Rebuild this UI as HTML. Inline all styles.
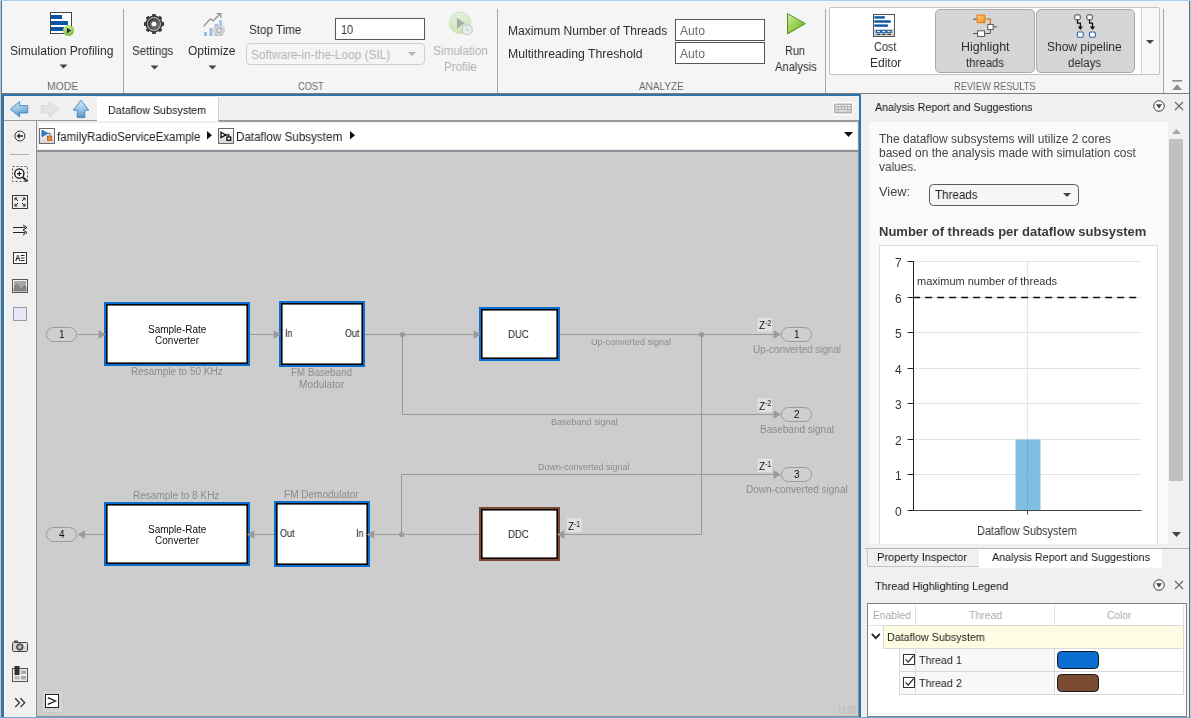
<!DOCTYPE html>
<html lang="en"><head><meta charset="utf-8"><title>Dataflow Subsystem - Multicore</title>
<style>
html,body{margin:0;padding:0;}
body{width:1191px;height:718px;overflow:hidden;background:#f5f5f5;font-family:"Liberation Sans",sans-serif;}
#root{position:relative;width:1191px;height:718px;overflow:hidden;background:#f5f5f5;}
.b{position:absolute;box-sizing:border-box;}
.t{position:absolute;will-change:transform;display:inline-block;transform-origin:0 0;white-space:nowrap;line-height:1;font-family:"Liberation Sans",sans-serif;}
svg{position:absolute;overflow:visible;}

</style></head>
<body>
<div id="root">
<div class="b" style="left:0px;top:0px;width:1191px;height:1px;background:#a3d0f3;"></div>
<div class="b" style="left:0px;top:0px;width:1px;height:718px;background:#a3d0f3;"></div>
<div class="b" style="left:1px;top:1px;width:1px;height:716px;background:#6b6b6b;z-index:5;"></div>
<div class="b" style="left:0px;top:717px;width:1191px;height:1px;background:#6fa7d5;z-index:6;"></div>
<div class="b" style="left:1189px;top:1px;width:1px;height:716px;background:#6e6e6e;z-index:5;"></div>
<div class="b" style="left:1190px;top:0px;width:1px;height:718px;background:#a3d0f3;z-index:5;"></div>
<div class="b" style="left:2px;top:93px;width:1187px;height:1px;background:#7d7d7d;"></div>
<div class="b" style="left:123px;top:9px;width:1px;height:84px;background:#a8a8a8;"></div>
<div class="b" style="left:497px;top:9px;width:1px;height:84px;background:#a8a8a8;"></div>
<div class="b" style="left:825px;top:9px;width:1px;height:84px;background:#a8a8a8;"></div>
<div class="b" style="left:1163px;top:9px;width:1px;height:84px;background:#a8a8a8;"></div>
<svg style="left:48px;top:10px" width="28" height="28" viewBox="48 10 28 28">
<rect x="50.5" y="12.5" width="21" height="21" fill="#fff" stroke="#444" stroke-width="1"/>
<rect x="51" y="15" width="11" height="4" fill="#0a55a5"/>
<rect x="51" y="21" width="17" height="4" fill="#0a55a5"/>
<rect x="51" y="27" width="15" height="4" fill="#0a55a5"/>
<defs><radialGradient id="gg" cx="0.4" cy="0.3" r="0.8"><stop offset="0" stop-color="#d4f0a0"/><stop offset="1" stop-color="#6fb52e"/></radialGradient></defs>
<circle cx="68.5" cy="30.5" r="5.5" fill="url(#gg)"/>
<path d="M66.8 27.6 L71.2 30.5 L66.8 33.4 Z" fill="#333"/>
</svg>
<span class="t" style="left:10.00px;top:45.04px;font-size:12px;color:#2e2e2e;transform:scaleX(1.0066);">Simulation Profiling</span>
<svg style="left:59px;top:64px" width="9" height="5" viewBox="0 0 9 5"><path d="M0.5 0.5 L8.5 0.5 L4.5 4.5 Z" fill="#444"/></svg>
<span class="t" style="left:47.40px;top:80.69px;font-size:11px;color:#666;transform:scaleX(0.9455);">MODE</span>
<svg style="left:142px;top:12px" width="24" height="24" viewBox="-12 -12 24 24">
<defs><linearGradient id="gr1" x1="0" y1="0" x2="1" y2="1"><stop offset="0" stop-color="#1e1e1e"/><stop offset="1" stop-color="#7a7a7a"/></linearGradient></defs>
<g fill="#3a3a3a">
<circle r="8.5"/>
<g id="tooth"><rect x="-1.9" y="-10.1" width="3.8" height="3.4" rx="0.9"/></g>
<use href="#tooth" transform="rotate(45)"/><use href="#tooth" transform="rotate(90)"/><use href="#tooth" transform="rotate(135)"/>
<use href="#tooth" transform="rotate(180)"/><use href="#tooth" transform="rotate(225)"/><use href="#tooth" transform="rotate(270)"/><use href="#tooth" transform="rotate(315)"/>
</g>
<circle r="6.9" fill="#c4c4c4"/>
<circle r="6.1" fill="url(#gr1)"/>
<circle r="4.3" fill="#8e8e8e"/>
<circle r="3.7" fill="#3c3c3c"/>
<circle r="2.6" fill="#fff"/>
</svg>
<span class="t" style="left:132.30px;top:45.04px;font-size:12px;color:#2e2e2e;transform:scaleX(0.9525);">Settings</span>
<svg style="left:150px;top:65px" width="9" height="5" viewBox="0 0 9 5"><path d="M0.5 0.5 L8.5 0.5 L4.5 4.5 Z" fill="#444"/></svg>
<svg style="left:200px;top:10px" width="28" height="28" viewBox="200 10 28 28">
<rect x="204" y="32" width="3" height="4" fill="#9dbbdc"/>
<rect x="209.5" y="28" width="3" height="8" fill="#9dbbdc"/>
<rect x="214.5" y="24" width="3" height="12" fill="#9dbbdc"/>
<rect x="219" y="20" width="3" height="16" fill="#a9c9e6"/>
<path d="M203.5 26.5 L210.5 18.8 L213 20.8 L220.5 13.8" fill="none" stroke="#929292" stroke-width="1.25"/>
<path d="M216.5 13.5 L220.8 13.5 L220.8 17.8" fill="none" stroke="#929292" stroke-width="1.25"/>
<circle cx="219.2" cy="30.2" r="5.2" fill="#d6d6d6" stroke="#c2c2c2" stroke-width="1.2" stroke-dasharray="2.2 1.4"/>
<circle cx="219.2" cy="30.2" r="3" fill="#aeb6c0"/>
<circle cx="219.2" cy="30.2" r="1.5" fill="#eee"/>
</svg>
<span class="t" style="left:188.40px;top:45.04px;font-size:12px;color:#2e2e2e;transform:scaleX(0.9949);">Optimize</span>
<svg style="left:208px;top:65px" width="9" height="5" viewBox="0 0 9 5"><path d="M0.5 0.5 L8.5 0.5 L4.5 4.5 Z" fill="#444"/></svg>
<span class="t" style="left:248.90px;top:24.34px;font-size:12px;color:#2e2e2e;transform:scaleX(0.9698);">Stop Time</span>
<div class="b" style="left:335px;top:18px;width:90px;height:22px;background:#fff;border:1px solid #575757;"></div>
<span class="t" style="left:341.00px;top:23.84px;font-size:12px;color:#2e2e2e;transform:scaleX(0.8982);">10</span>
<div class="b" style="left:245.5px;top:43px;width:179.5px;height:21.5px;background:#f5f5f5;border:1px solid #cfcfcf;border-radius:4px;"></div>
<span class="t" style="left:250.60px;top:49.04px;font-size:12px;color:#b2b2b2;transform:scaleX(0.9837);">Software-in-the-Loop (SIL)</span>
<svg style="left:408px;top:52px" width="8" height="4" viewBox="0 0 8 4"><path d="M0 0 L8 0 L4 4 Z" fill="#b5b5b5"/></svg>
<svg style="left:446px;top:9px" width="30" height="30" viewBox="446 9 30 30">
<defs><linearGradient id="lg1" x1="0" y1="0" x2="0" y2="1"><stop offset="0" stop-color="#e4f1da"/><stop offset="1" stop-color="#cbe6b8"/></linearGradient></defs>
<circle cx="460" cy="22.8" r="10.7" fill="url(#lg1)" stroke="#c3dfb3" stroke-width="0.8"/>
<path d="M457 18 L464.8 23.2 L457 28.4 Z" fill="#ababab"/>
<circle cx="467.3" cy="29.8" r="5" fill="#e6eef3" stroke="#c2c2c2" stroke-width="1"/>
<path d="M466.8 27.5 L466.8 30.6 L468.8 30.6" fill="none" stroke="#b8b8b8" stroke-width="1"/>
</svg>
<span class="t" style="left:433.00px;top:44.84px;font-size:12px;color:#b2b2b2;transform:scaleX(0.9816);">Simulation</span>
<span class="t" style="left:444.00px;top:60.84px;font-size:12px;color:#b2b2b2;transform:scaleX(0.9643);">Profile</span>
<span class="t" style="left:297.50px;top:80.69px;font-size:11px;color:#666;transform:scaleX(0.8409);">COST</span>
<span class="t" style="left:507.70px;top:24.84px;font-size:12px;color:#2e2e2e;transform:scaleX(1.0044);">Maximum Number of Threads</span>
<span class="t" style="left:507.70px;top:47.64px;font-size:12px;color:#2e2e2e;transform:scaleX(1.0200);">Multithreading Threshold</span>
<div class="b" style="left:675px;top:19px;width:90px;height:22px;background:#fff;border:1px solid #575757;"></div>
<div class="b" style="left:675px;top:42px;width:90px;height:22px;background:#fff;border:1px solid #575757;"></div>
<span class="t" style="left:680.40px;top:25.14px;font-size:12px;color:#6c6c6c;transform:scaleX(1.0127);">Auto</span>
<span class="t" style="left:680.40px;top:48.14px;font-size:12px;color:#6c6c6c;transform:scaleX(1.0127);">Auto</span>
<svg style="left:785px;top:11px" width="24" height="26" viewBox="785 11 24 26">
<defs><linearGradient id="lg2" x1="0" y1="0" x2="1" y2="1"><stop offset="0" stop-color="#d6efa8"/><stop offset="0.6" stop-color="#8dc63f"/><stop offset="1" stop-color="#6aa82a"/></linearGradient></defs>
<path d="M787.5 13.6 L805.3 23.6 L787.5 34 Z" fill="url(#lg2)" stroke="#4f9420" stroke-width="1" stroke-linejoin="round"/>
</svg>
<span class="t" style="left:785.30px;top:44.64px;font-size:12px;color:#2e2e2e;transform:scaleX(0.9084);">Run</span>
<span class="t" style="left:774.50px;top:60.84px;font-size:12px;color:#2e2e2e;transform:scaleX(0.9331);">Analysis</span>
<span class="t" style="left:639.30px;top:80.69px;font-size:11px;color:#666;transform:scaleX(0.9065);">ANALYZE</span>
<div class="b" style="left:829px;top:7px;width:331px;height:67.5px;background:#fff;border:1px solid #c4c4c4;border-radius:2px;"></div>
<div class="b" style="left:1140.5px;top:8px;width:1px;height:65.5px;background:#d5d5d5;"></div>
<div class="b" style="left:1141.5px;top:8px;width:17.5px;height:65.5px;background:#f7f7f7;"></div>
<svg style="left:1146px;top:40px" width="8" height="4" viewBox="0 0 8 4"><path d="M0 0 L8 0 L4 4 Z" fill="#444"/></svg>
<svg style="left:872px;top:13px" width="25" height="25" viewBox="872 13 25 25">
<rect x="873.5" y="14.5" width="21" height="22" fill="#fff" stroke="#555" stroke-width="1"/>
<rect x="874.3" y="16.2" width="10.5" height="2.4" fill="#0a55a5"/>
<rect x="874.3" y="20.3" width="16.5" height="2.4" fill="#0a55a5"/>
<rect x="874.3" y="24.4" width="13.6" height="2.4" fill="#0a55a5"/>
<rect x="874" y="29" width="20" height="7" fill="#cfcfcf"/>
<rect x="875.8" y="30.2" width="16" height="2.6" fill="#0a55a5"/>
<rect x="877" y="31" width="3" height="1" fill="#dfe8f5"/><rect x="882.2" y="31" width="3" height="1" fill="#dfe8f5"/><rect x="887.4" y="31" width="3" height="1" fill="#dfe8f5"/>
<rect x="876.5" y="33.8" width="3.8" height="1" fill="#222"/><rect x="881.8" y="33.8" width="3.8" height="1" fill="#222"/><rect x="887.2" y="33.8" width="3.8" height="1" fill="#222"/>
</svg>
<span class="t" style="left:873.90px;top:41.34px;font-size:12px;color:#2e2e2e;transform:scaleX(0.9073);">Cost</span>
<span class="t" style="left:869.80px;top:57.34px;font-size:12px;color:#2e2e2e;transform:scaleX(0.9949);">Editor</span>
<div class="b" style="left:935px;top:9px;width:100px;height:64px;background:#d5d5d5;border:1px solid #a9a9a9;border-radius:5px;"></div>
<svg style="left:972px;top:13px" width="27" height="26" viewBox="972 13 27 26">
<defs><linearGradient id="og" x1="0" y1="0" x2="1" y2="1"><stop offset="0" stop-color="#fbd08a"/><stop offset="1" stop-color="#f28c1e"/></linearGradient></defs>
<path d="M973 19.2 H977 M993.3 26.8 H997 M973 33.5 H977.3 M984.7 33.5 H990.3 V29.6" fill="none" stroke="#555" stroke-width="1"/>
<path d="M985.2 19 H990.3 V24.2" fill="none" stroke="#d66a10" stroke-width="1.2"/>
<rect x="977.2" y="15.2" width="7.6" height="7.4" fill="url(#og)" stroke="#e8821a" stroke-width="1.2"/>
<rect x="987.8" y="24.4" width="5.4" height="5.2" fill="#fff" stroke="#555" stroke-width="1"/>
<rect x="977.6" y="30.8" width="7" height="5.6" fill="#fff" stroke="#555" stroke-width="1"/>
</svg>
<span class="t" style="left:960.80px;top:41.34px;font-size:12px;color:#2e2e2e;transform:scaleX(1.0406);">Highlight</span>
<span class="t" style="left:966.40px;top:57.34px;font-size:12px;color:#2e2e2e;transform:scaleX(0.9493);">threads</span>
<div class="b" style="left:1035.5px;top:9px;width:99.5px;height:64px;background:#d5d5d5;border:1px solid #a9a9a9;border-radius:5px;"></div>
<svg style="left:1073px;top:13px" width="25" height="26" viewBox="1073 13 25 26">
<rect x="1074.8" y="14.9" width="5.4" height="4.8" rx="0.8" fill="#fff" stroke="#444" stroke-width="1"/>
<rect x="1086.9" y="14.9" width="5.4" height="4.8" rx="0.8" fill="#fff" stroke="#444" stroke-width="1"/>
<path d="M1077.5 20 V23.2 H1080.4 V27.5" fill="none" stroke="#111" stroke-width="1.3"/>
<path d="M1077.8 26.6 H1083 L1080.4 30 Z" fill="#111"/>
<path d="M1089.6 20 V23.2 H1092.5 V27.5" fill="none" stroke="#111" stroke-width="1.3"/>
<path d="M1089.9 26.6 H1095.1 L1092.5 30 Z" fill="#111"/>
<rect x="1077.4" y="32" width="5.8" height="5.2" rx="1.1" fill="#fff" stroke="#2a62ad" stroke-width="1.1"/>
<rect x="1089.5" y="32" width="5.8" height="5.2" rx="1.1" fill="#fff" stroke="#2a62ad" stroke-width="1.1"/>
</svg>
<span class="t" style="left:1047.40px;top:41.34px;font-size:12px;color:#2e2e2e;">Show pipeline</span>
<span class="t" style="left:1068.30px;top:57.34px;font-size:12px;color:#2e2e2e;transform:scaleX(0.9514);">delays</span>
<span class="t" style="left:954.00px;top:80.69px;font-size:11px;color:#666;transform:scaleX(0.8467);">REVIEW RESULTS</span>
<svg style="left:1171px;top:79px" width="13" height="12" viewBox="0 0 13 12">
<rect x="1.2" y="1" width="10" height="1.7" fill="#8f8f8f"/>
<path d="M6.2 5.2 L11.2 11 L1.2 11 Z" fill="#8f8f8f"/>
</svg>
<div class="b" style="left:2px;top:94px;width:859px;height:630px;background:#f0f0f0;border:2px solid #2e73ab;"></div>
<div class="b" style="left:4px;top:120px;width:855px;height:1px;background:#9a9a9a;"></div>
<div class="b" style="left:97px;top:96px;width:121px;height:26px;background:#fff;border-top:1px solid #e6e6e6;"></div>
<div class="b" style="left:218px;top:97px;width:1px;height:23px;background:#d4d4d4;"></div>
<span class="t" style="left:108.20px;top:104.87px;font-size:11.5px;color:#111;transform:scaleX(0.9358);">Dataflow Subsystem</span>
<svg style="left:8px;top:98px" width="84" height="22" viewBox="8 98 84 22">
<defs>
<linearGradient id="ab" x1="0" y1="0" x2="0.3" y2="1"><stop offset="0" stop-color="#d6ebfa"/><stop offset="0.5" stop-color="#9fcaea"/><stop offset="1" stop-color="#5a9bd0"/></linearGradient>
<linearGradient id="ab2" x1="0" y1="0" x2="0" y2="1"><stop offset="0" stop-color="#cfe7f8"/><stop offset="0.5" stop-color="#9ccaeb"/><stop offset="1" stop-color="#4f93cb"/></linearGradient>
</defs>
<path d="M10.3 109.2 L19.6 101.6 L19.6 105.6 L27.7 105.6 L27.7 112.9 L19.6 112.9 L19.6 116.9 Z" fill="url(#ab)" stroke="#4682ba" stroke-width="0.9" stroke-linejoin="round"/>
<path d="M58.7 109.2 L49.4 101.6 L49.4 105.6 L41.3 105.6 L41.3 112.9 L49.4 112.9 L49.4 116.9 Z" fill="#e4e4e4" stroke="#d6d6d6" stroke-width="0.9" stroke-linejoin="round"/>
<path d="M81 100.3 L88.8 110.2 L84.8 110.2 L84.8 117.6 L77.2 117.6 L77.2 110.2 L73.2 110.2 Z" fill="url(#ab2)" stroke="#4682ba" stroke-width="0.9" stroke-linejoin="round"/>
</svg>
<svg style="left:833px;top:102px" width="20" height="13" viewBox="0 0 20 13">
<rect x="0" y="0" width="20" height="13" fill="#fff"/>
<rect x="1" y="1.5" width="18" height="10" fill="#b4b4b4"/>
<g fill="#efefef"><rect x="2.5" y="3" width="2" height="1.3"/><rect x="5.5" y="3" width="2" height="1.3"/><rect x="8.5" y="3" width="2" height="1.3"/><rect x="11.5" y="3" width="2" height="1.3"/><rect x="14.5" y="3" width="2.6" height="1.3"/>
<rect x="2.5" y="5.6" width="2.6" height="1.3"/><rect x="6" y="5.6" width="2" height="1.3"/><rect x="9" y="5.6" width="2" height="1.3"/><rect x="12" y="5.6" width="2" height="1.3"/><rect x="15" y="5.6" width="2.4" height="1.3"/>
<rect x="2.5" y="8.3" width="2" height="1.3"/><rect x="5.5" y="8.3" width="9" height="1.3"/><rect x="15.5" y="8.3" width="2" height="1.3"/></g>
</svg>
<div class="b" style="left:36px;top:121px;width:1px;height:596px;background:#868b94;"></div>
<div class="b" style="left:10px;top:154px;width:19px;height:1px;background:#b0b0b0;"></div>
<svg style="left:8px;top:126px" width="26" height="200" viewBox="8 126 26 200">
<circle cx="19.9" cy="136" r="5" fill="#f4f4f4" stroke="#333" stroke-width="1"/>
<path d="M16.6 136 L19.6 133.3 L19.6 135.2 L23 135.2 L23 136.8 L19.6 136.8 L19.6 138.7 Z" fill="#222"/>
<rect x="12.5" y="166.5" width="15" height="15" fill="none" stroke="#555" stroke-width="1" stroke-dasharray="2 2"/>
<circle cx="19.3" cy="173.6" r="4.6" fill="#fff" stroke="#222" stroke-width="1.4"/>
<path d="M17 173.6 H21.6 M19.3 171.3 V175.9" stroke="#111" stroke-width="1.2"/>
<path d="M22.8 177.2 L27.2 181.2" stroke="#222" stroke-width="2"/>
<rect x="12.5" y="195.5" width="15" height="13" fill="#eee" stroke="#3a3a3a" stroke-width="1"/>
<path d="M15 198 L18 201 M15 198 H17.3 M15 198 V200.3 M25 198 L22 201 M25 198 H22.7 M25 198 V200.3 M15 206 L18 203 M15 206 H17.3 M15 206 V203.7 M25 206 L22 203 M25 206 H22.7 M25 206 V203.7" stroke="#222" stroke-width="1" fill="none"/>
<path d="M13 227.5 H25 M13 232.5 H25" stroke="#222" stroke-width="1.2"/>
<path d="M23 225 L27 227.5 L23 230 M23 230 L27 232.5 L23 235" stroke="#222" stroke-width="1" fill="none"/>
<rect x="13.5" y="252.5" width="13" height="11" fill="#fff" stroke="#333" stroke-width="1"/>
<path d="M20.8 255.5 H24.6 M20.8 258 H24.6 M20.8 260.5 H24.6" stroke="#222" stroke-width="1"/>
<rect x="12.5" y="279.5" width="15" height="13" fill="#f2f2f2" stroke="#555" stroke-width="1"/>
<rect x="14" y="281" width="12" height="10" fill="#a8a8a8"/>
<path d="M14 289 C15.5 283.5 18 283.5 19.5 287 C20.5 289.5 22 289.5 23 287 C24 285 25 285.5 26 287.5 V291 H14 Z" fill="#8a8a8a" stroke="#666" stroke-width="0.7"/>
<rect x="13.5" y="307.5" width="13" height="13" fill="#e7e9f9" stroke="#9a9a9a" stroke-width="1"/>
</svg>
<span class="t" style="left:15.00px;top:253.98px;font-size:9px;color:#111;font-weight:bold;transform:scaleX(0.8615);">A</span>
<svg style="left:10px;top:638px" width="22" height="72" viewBox="10 638 22 72">
<rect x="12.5" y="642.5" width="15" height="9" rx="1" fill="#d8d8d8" stroke="#444" stroke-width="1"/>
<rect x="14" y="640.5" width="4" height="2" fill="#555"/>
<circle cx="19.8" cy="647" r="3.2" fill="#888" stroke="#333" stroke-width="1"/>
<circle cx="19.8" cy="647" r="1.3" fill="#ccc"/>
<rect x="24" y="644" width="2" height="1.4" fill="#fff"/>
<rect x="12.5" y="668.5" width="15" height="13" fill="#ececec" stroke="#555" stroke-width="1"/>
<rect x="14.5" y="666" width="5" height="9" fill="#333"/>
<rect x="21" y="670.5" width="5" height="3.5" fill="#aaa"/><rect x="21" y="676" width="5" height="3.5" fill="#aaa"/><rect x="14.5" y="676" width="5" height="3.5" fill="#bbb"/>
<path d="M15.2 698.3 L19.5 702.7 L15.2 707.1 M20.4 698.3 L24.7 702.7 L20.4 707.1" fill="none" stroke="#333" stroke-width="1.3"/>
</svg>
<div class="b" style="left:37px;top:121px;width:822px;height:30px;background:#fff;border:2px solid #eeeeee;"></div>
<div class="b" style="left:37px;top:150px;width:822px;height:2px;background:#8a8f98;"></div>
<div class="b" style="left:219px;top:121px;width:640px;height:1px;background:#a2a2a2;"></div>
<svg style="left:38px;top:126px" width="320" height="20" viewBox="38 126 320 20">
<defs><linearGradient id="ic" x1="0" y1="0" x2="0" y2="1"><stop offset="0" stop-color="#fff"/><stop offset="1" stop-color="#d4d4d4"/></linearGradient></defs>
<rect x="39.5" y="128.5" width="15" height="15" fill="url(#ic)" stroke="#6a6a6a" stroke-width="1"/>
<path d="M42 130.3 L47.8 133.4 L42 136.5 Z" fill="#2a7fd6" stroke="#1b5aa3" stroke-width="0.8"/>
<path d="M47.8 133.4 H50 V136" fill="none" stroke="#444" stroke-width="0.8"/>
<rect x="47.5" y="136.2" width="4.2" height="4.2" fill="#f08a2a" stroke="#b55a10" stroke-width="0.8"/>
<path d="M207 131 L212 135.3 L207 139.6 Z" fill="#111"/>
<rect x="218.5" y="128.5" width="15" height="15" fill="url(#ic)" stroke="#6a6a6a" stroke-width="1"/>
<path d="M221 132.2 L225.8 134.9 L221 137.6 Z" fill="#fff" stroke="#111" stroke-width="1.3"/>
<path d="M225.6 134.9 H228.7 V136.8" fill="none" stroke="#111" stroke-width="1.2"/>
<rect x="226.9" y="137" width="3.8" height="3.3" fill="#fff" stroke="#111" stroke-width="1.3"/>
<path d="M350 131 L355 135.3 L350 139.6 Z" fill="#111"/>
</svg>
<span class="t" style="left:56.80px;top:131.04px;font-size:12px;color:#222;transform:scaleX(0.9599);">familyRadioServiceExample</span>
<span class="t" style="left:235.80px;top:131.04px;font-size:12px;color:#222;transform:scaleX(0.9708);">Dataflow Subsystem</span>
<svg style="left:844px;top:132px" width="9" height="5" viewBox="0 0 9 5"><path d="M0 0 L9 0 L4.5 5 Z" fill="#111"/></svg>
<div class="b" style="left:37px;top:152px;width:821px;height:564px;background:#cdcdcd;"></div>
<div class="b" style="left:858px;top:121px;width:1px;height:596px;background:#8c8c8c;"></div>
<div class="b" style="left:37px;top:716px;width:822px;height:1px;background:#8c8c8c;"></div>
<div class="b" style="left:4px;top:121px;width:1px;height:596px;background:#fbfaf8;"></div>
<div class="b" style="left:35px;top:121px;width:1px;height:596px;background:#fbfaf8;"></div>
<svg style="left:37px;top:152px" width="821" height="563" viewBox="37 152 821 563">
<g fill="none" stroke="#9a9a9a" stroke-width="1">
<path d="M78 334.5 H100"/>
<path d="M250 334.5 H275"/>
<path d="M364 334.5 H476"/>
<path d="M402.5 334.5 V414.5 H776"/>
<path d="M560 334.5 H776"/>
<path d="M701.5 334.5 V534.5 H562"/>
<path d="M479 534.5 H374"/>
<path d="M401.5 534.5 V474.5 H776"/>
<path d="M274 534.5 H254"/>
<path d="M104 534.5 H84"/>
</g>
<circle cx="402.5" cy="334.5" r="2.6" fill="#9a9a9a"/>
<circle cx="701.5" cy="334.5" r="2.6" fill="#9a9a9a"/>
<circle cx="401.5" cy="534.5" r="2.6" fill="#9a9a9a"/>
<rect x="104" y="302" width="146" height="64" fill="#0a6dd0"/><rect x="106" y="304" width="142" height="60" fill="#0a0503"/><rect x="107.6" y="305.6" width="138.8" height="56.8" fill="#fff"/>
<rect x="279" y="301" width="86" height="66" fill="#0a6dd0"/><rect x="281" y="303" width="82" height="62" fill="#0a0503"/><rect x="282.6" y="304.6" width="78.8" height="58.8" fill="#fff"/>
<rect x="479" y="307" width="81" height="54" fill="#0a6dd0"/><rect x="481" y="309" width="77" height="50" fill="#0a0503"/><rect x="482.6" y="310.6" width="73.8" height="46.8" fill="#fff"/>
<rect x="104" y="502" width="146" height="64" fill="#0a6dd0"/><rect x="106" y="504" width="142" height="60" fill="#0a0503"/><rect x="107.6" y="505.6" width="138.8" height="56.8" fill="#fff"/>
<rect x="274" y="501" width="96" height="66" fill="#0a6dd0"/><rect x="276" y="503" width="92" height="62" fill="#0a0503"/><rect x="277.6" y="504.6" width="88.8" height="58.8" fill="#fff"/>
<rect x="479" y="507" width="81" height="54" fill="#7b4a33"/><rect x="481" y="509" width="77" height="50" fill="#0a0503"/><rect x="482.6" y="510.6" width="73.8" height="46.8" fill="#fff"/>
<path d="M98.6 330.3 L106 334.5 L98.6 338.7 Z" fill="#9a9a9a"/>
<path d="M273.6 330.3 L281 334.5 L273.6 338.7 Z" fill="#9a9a9a"/>
<path d="M473.6 330.3 L481 334.5 L473.6 338.7 Z" fill="#9a9a9a"/>
<path d="M773.6 330.3 L781 334.5 L773.6 338.7 Z" fill="#9a9a9a"/>
<path d="M773.6 410.3 L781 414.5 L773.6 418.7 Z" fill="#9a9a9a"/>
<path d="M773.6 470.3 L781 474.5 L773.6 478.7 Z" fill="#9a9a9a"/>
<path d="M564.4 530.3 L557 534.5 L564.4 538.7 Z" fill="#9a9a9a"/>
<path d="M374.2 530.3 L366.8 534.5 L374.2 538.7 Z" fill="#9a9a9a"/>
<path d="M254.4 530.3 L247 534.5 L254.4 538.7 Z" fill="#9a9a9a"/>
<path d="M84.9 530.3 L77.5 534.5 L84.9 538.7 Z" fill="#9a9a9a"/>
<rect x="46.5" y="327.5" width="30" height="14" rx="7" fill="#cfcfcf" stroke="#9a9a9a" stroke-width="1"/>
<rect x="46.5" y="527.5" width="30" height="14" rx="7" fill="#cfcfcf" stroke="#9a9a9a" stroke-width="1"/>
<rect x="781.5" y="327.5" width="30" height="14" rx="7" fill="#cfcfcf" stroke="#9a9a9a" stroke-width="1"/>
<rect x="781.5" y="407.5" width="30" height="14" rx="7" fill="#cfcfcf" stroke="#9a9a9a" stroke-width="1"/>
<rect x="781.5" y="467.5" width="30" height="14" rx="7" fill="#cfcfcf" stroke="#9a9a9a" stroke-width="1"/>
<rect x="757.7" y="318" width="14.3" height="13.7" fill="#e2e2e2"/>
<rect x="757.7" y="398.4" width="14.3" height="13.6" fill="#e2e2e2"/>
<rect x="757.7" y="458.6" width="14.3" height="13.4" fill="#e2e2e2"/>
<rect x="566.8" y="518.2" width="14.8" height="13.8" fill="#e2e2e2"/>
<rect x="837" y="704.5" width="21" height="10.5" fill="#d4d4d4"/>
<rect x="837.8" y="705.3" width="3.4" height="9.2" fill="#c4c4c4"/><rect x="842.4" y="705.3" width="3.4" height="9.2" fill="#c4c4c4"/><rect x="847.2" y="705.3" width="10" height="9.2" fill="#c4c4c4"/>
<rect x="41.5" y="690.5" width="22" height="22" rx="3" fill="#d3d3d3" stroke="#c6c6c6" stroke-width="1"/>
<rect x="45.5" y="694.5" width="13" height="13" fill="#fff" stroke="#222" stroke-width="1"/>
<path d="M47.8 697.6 L55.6 701 L47.8 704.4" fill="none" stroke="#111" stroke-width="1.2"/>
</svg>
<span class="t" style="left:59.30px;top:329.64px;font-size:10px;color:#111;">1</span>
<span class="t" style="left:59.00px;top:529.63px;font-size:10px;color:#111;">4</span>
<span class="t" style="left:794.00px;top:329.64px;font-size:10px;color:#111;">1</span>
<span class="t" style="left:793.70px;top:409.64px;font-size:10px;color:#111;">2</span>
<span class="t" style="left:793.70px;top:469.64px;font-size:10px;color:#111;">3</span>
<span class="t" style="left:147.80px;top:324.94px;font-size:10px;color:#111;transform:scaleX(0.9938);">Sample-Rate</span>
<span class="t" style="left:154.90px;top:335.54px;font-size:10px;color:#111;transform:scaleX(1.0021);">Converter</span>
<span class="t" style="left:130.80px;top:367.14px;font-size:10px;color:#8b8b8b;transform:scaleX(0.9965);">Resample to 50 KHz</span>
<span class="t" style="left:285.30px;top:328.74px;font-size:10px;color:#111;transform:scaleX(0.8869);">In</span>
<span class="t" style="left:344.80px;top:328.74px;font-size:10px;color:#111;transform:scaleX(0.8930);">Out</span>
<span class="t" style="left:291.20px;top:367.74px;font-size:10px;color:#8b8b8b;transform:scaleX(0.9765);">FM Baseband</span>
<span class="t" style="left:299.00px;top:379.74px;font-size:10px;color:#8b8b8b;transform:scaleX(1.0119);">Modulator</span>
<span class="t" style="left:508.30px;top:329.74px;font-size:10px;color:#111;transform:scaleX(0.9552);">DUC</span>
<span class="t" style="left:590.90px;top:338.18px;font-size:9px;color:#8b8b8b;">Up-converted signal</span>
<span class="t" style="left:550.70px;top:418.18px;font-size:9px;color:#8b8b8b;transform:scaleX(1.0021);">Baseband signal</span>
<span class="t" style="left:537.70px;top:463.18px;font-size:9px;color:#8b8b8b;">Down-converted signal</span>
<span class="t" style="left:752.60px;top:345.44px;font-size:10px;color:#8b8b8b;transform:scaleX(0.9917);">Up-converted signal</span>
<span class="t" style="left:759.50px;top:425.24px;font-size:10px;color:#8b8b8b;transform:scaleX(0.9966);">Baseband signal</span>
<span class="t" style="left:745.70px;top:485.24px;font-size:10px;color:#8b8b8b;">Down-converted signal</span>
<span class="t" style="left:133.30px;top:490.74px;font-size:10px;color:#8b8b8b;transform:scaleX(1.0028);">Resample to 8 KHz</span>
<span class="t" style="left:147.80px;top:524.93px;font-size:10px;color:#111;transform:scaleX(0.9938);">Sample-Rate</span>
<span class="t" style="left:154.90px;top:535.53px;font-size:10px;color:#111;transform:scaleX(1.0021);">Converter</span>
<span class="t" style="left:283.90px;top:489.74px;font-size:10px;color:#8b8b8b;transform:scaleX(1.0031);">FM Demodulator</span>
<span class="t" style="left:280.20px;top:528.93px;font-size:10px;color:#111;transform:scaleX(0.9054);">Out</span>
<span class="t" style="left:356.30px;top:528.93px;font-size:10px;color:#111;transform:scaleX(0.8989);">In</span>
<span class="t" style="left:508.30px;top:529.74px;font-size:10px;color:#111;transform:scaleX(0.9552);">DDC</span>
<span class="t" style="left:759.00px;top:321.34px;font-size:10px;color:#111;transform:scaleX(0.9821);">Z</span>
<span class="t" style="left:765.30px;top:319.96px;font-size:8.2px;color:#111;transform:scaleX(0.8515);">-2</span>
<span class="t" style="left:759.00px;top:401.74px;font-size:10px;color:#111;transform:scaleX(0.9821);">Z</span>
<span class="t" style="left:765.30px;top:400.36px;font-size:8.2px;color:#111;transform:scaleX(0.8515);">-2</span>
<span class="t" style="left:759.00px;top:461.94px;font-size:10px;color:#111;transform:scaleX(0.9821);">Z</span>
<span class="t" style="left:765.30px;top:460.56px;font-size:8.2px;color:#111;transform:scaleX(0.8515);">-1</span>
<span class="t" style="left:567.80px;top:521.93px;font-size:10px;color:#111;transform:scaleX(0.9821);">Z</span>
<span class="t" style="left:574.10px;top:520.56px;font-size:8.2px;color:#111;transform:scaleX(0.8515);">-1</span>
<div class="b" style="left:861px;top:94px;width:330px;height:624px;background:#f0f0f0;"></div>
<span class="t" style="left:875.30px;top:101.57px;font-size:11.5px;color:#111;transform:scaleX(0.9291);">Analysis Report and Suggestions</span>
<svg style="left:1152px;top:98.9px" width="34" height="14" viewBox="0 0 34 14">
<circle cx="7" cy="7" r="5.3" fill="#f6f6f6" stroke="#444" stroke-width="1"/>
<path d="M4 5.2 L10 5.2 L7 9.6 Z" fill="#444"/>
<path d="M23 3 L31 11 M31 3 L23 11" stroke="#6a6a6a" stroke-width="1.15"/>
</svg>
<div class="b" style="left:869px;top:122px;width:299px;height:421.5px;background:#fafafa;"></div>
<span class="t" style="left:878.90px;top:132.64px;font-size:12px;color:#444;">The dataflow subsystems will utilize 2 cores</span>
<span class="t" style="left:878.90px;top:146.64px;font-size:12px;color:#444;">based on the analysis made with simulation cost</span>
<span class="t" style="left:878.90px;top:160.64px;font-size:12px;color:#444;transform:scaleX(0.9834);">values.</span>
<span class="t" style="left:878.90px;top:185.64px;font-size:12px;color:#444;transform:scaleX(1.0672);">View:</span>
<div class="b" style="left:929px;top:184.3px;width:150px;height:21.7px;background:#f6f6f6;border:1px solid #5a5a5a;border-radius:4.5px;"></div>
<span class="t" style="left:934.70px;top:188.64px;font-size:12px;color:#222;transform:scaleX(0.9675);">Threads</span>
<svg style="left:1063px;top:193px" width="8" height="4" viewBox="0 0 8 4"><path d="M0 0 L8 0 L4 4 Z" fill="#444"/></svg>
<span class="t" style="left:878.90px;top:225.00px;font-size:13px;color:#3a3a3a;font-weight:bold;">Number of threads per dataflow subsystem</span>
<div class="b" style="left:879px;top:245px;width:279px;height:298.5px;background:#fff;border:1px solid #dcdcdc;border-bottom:none;"></div>
<svg style="left:880px;top:246px;overflow:hidden" width="277" height="297.5" viewBox="880 246 277 297.5">
<g stroke="#e4e4e4" stroke-width="1">
<path d="M914 261.5 H1141.5"/>
<path d="M914 297.5 H1141.5"/>
<path d="M914 332.5 H1141.5"/>
<path d="M914 368.5 H1141.5"/>
<path d="M914 403.5 H1141.5"/>
<path d="M914 439.5 H1141.5"/>
<path d="M914 474.5 H1141.5"/>
<path d="M1027.5 261.5 V510"/>
</g>
<rect x="1015.5" y="439.5" width="25" height="71" fill="#6bb4dd" fill-opacity="0.85"/>
<path d="M1027.5 440 V510" stroke="#63aad4" stroke-width="1" stroke-opacity="0.6"/>
<g stroke="#222" stroke-width="1">
<path d="M913.5 261 V511"/>
<path d="M907.5 261.5 H914"/>
<path d="M907.5 297.5 H914"/>
<path d="M907.5 332.5 H914"/>
<path d="M907.5 368.5 H914"/>
<path d="M907.5 403.5 H914"/>
<path d="M907.5 439.5 H914"/>
<path d="M907.5 474.5 H914"/>
<path d="M907.5 510.5 H914"/>
<path d="M913.5 510.5 H1141.5" stroke="#444"/>
<path d="M1027.5 510.5 V514.5" stroke="#444"/>
</g>
<path d="M913.2 297.5 H1137" stroke="#111" stroke-width="1.6" stroke-dasharray="7 5"/>
</svg>
<span class="t" style="left:894.70px;top:256.94px;font-size:12px;color:#333;">7</span>
<span class="t" style="left:894.70px;top:292.94px;font-size:12px;color:#333;">6</span>
<span class="t" style="left:894.70px;top:327.94px;font-size:12px;color:#333;">5</span>
<span class="t" style="left:894.70px;top:363.94px;font-size:12px;color:#333;">4</span>
<span class="t" style="left:894.70px;top:398.94px;font-size:12px;color:#333;">3</span>
<span class="t" style="left:894.70px;top:434.94px;font-size:12px;color:#333;">2</span>
<span class="t" style="left:894.70px;top:469.94px;font-size:12px;color:#333;">1</span>
<span class="t" style="left:894.70px;top:505.94px;font-size:12px;color:#333;">0</span>
<span class="t" style="left:917.10px;top:275.69px;font-size:11px;color:#333;transform:scaleX(0.9971);">maximum number of threads</span>
<span class="t" style="left:977.00px;top:524.84px;font-size:12px;color:#333;transform:scaleX(0.9123);">Dataflow Subsystem</span>
<div class="b" style="left:1168px;top:122px;width:17px;height:421.5px;background:#f0f0f0;"></div>
<div class="b" style="left:1169.2px;top:139px;width:14px;height:342px;background:#c1c1c1;"></div>
<svg style="left:1172px;top:129px" width="9" height="5" viewBox="0 0 9 5"><path d="M0 5 L4.5 0 L9 5 Z" fill="#a6a6a6"/></svg>
<svg style="left:1172px;top:532px" width="9" height="5" viewBox="0 0 9 5"><path d="M0 0 L9 0 L4.5 5 Z" fill="#444"/></svg>
<div class="b" style="left:865px;top:548px;width:324px;height:1px;background:#b4b4b4;"></div>
<div class="b" style="left:867px;top:549px;width:111.5px;height:18px;background:#f0f0f0;border:1px solid #c8c8c8;border-top:none;border-right:none;"></div>
<div class="b" style="left:978.5px;top:549px;width:183px;height:19px;background:#fff;"></div>
<span class="t" style="left:877.30px;top:552.47px;font-size:11.5px;color:#111;transform:scaleX(0.9578);">Property Inspector</span>
<span class="t" style="left:991.80px;top:552.47px;font-size:11.5px;color:#111;transform:scaleX(0.9327);">Analysis Report and Suggestions</span>
<span class="t" style="left:875.30px;top:580.77px;font-size:11.5px;color:#111;transform:scaleX(0.9427);">Thread Highlighting Legend</span>
<svg style="left:1152px;top:578.4px" width="34" height="14" viewBox="0 0 34 14">
<circle cx="7" cy="7" r="5.3" fill="#f6f6f6" stroke="#444" stroke-width="1"/>
<path d="M4 5.2 L10 5.2 L7 9.6 Z" fill="#444"/>
<path d="M23 3 L31 11 M31 3 L23 11" stroke="#6a6a6a" stroke-width="1.15"/>
</svg>
<div class="b" style="left:867px;top:603px;width:320px;height:114px;background:#fff;border:1px solid #7b828e;"></div>
<span class="t" style="left:873.00px;top:609.99px;font-size:11px;color:#a8a8a8;transform:scaleX(0.9387);">Enabled</span>
<span class="t" style="left:969.00px;top:609.99px;font-size:11px;color:#a8a8a8;transform:scaleX(0.9553);">Thread</span>
<span class="t" style="left:1106.80px;top:609.99px;font-size:11px;color:#a8a8a8;transform:scaleX(0.9317);">Color</span>
<div class="b" style="left:915px;top:604px;width:1px;height:21px;background:#e2e2e2;"></div>
<div class="b" style="left:1054px;top:604px;width:1px;height:21px;background:#e2e2e2;"></div>
<div class="b" style="left:1183px;top:604px;width:1px;height:91px;background:#e2e2e2;"></div>
<div class="b" style="left:868px;top:625px;width:316px;height:1px;background:#e2e2e2;"></div>
<div class="b" style="left:883px;top:625px;width:301px;height:24px;background:#fdfde3;border:1px solid #d9d9d9;"></div>
<svg style="left:871px;top:633px" width="10" height="7" viewBox="0 0 10 7"><path d="M0.8 0.9 L4.8 5.2 L8.8 0.9" fill="none" stroke="#222" stroke-width="1.7"/></svg>
<span class="t" style="left:887.20px;top:631.59px;font-size:11px;color:#222;transform:scaleX(0.9754);">Dataflow Subsystem</span>
<div class="b" style="left:899px;top:648px;width:285px;height:24px;background:#fff;border:1px solid #d9d9d9;"></div>
<div class="b" style="left:900px;top:649px;width:15px;height:22px;background:#f8f8f8;"></div>
<div class="b" style="left:916px;top:649px;width:138px;height:22px;background:#f8f8f8;"></div>
<div class="b" style="left:915px;top:648px;width:1px;height:24px;background:#d9d9d9;"></div>
<div class="b" style="left:1054px;top:648px;width:1px;height:24px;background:#d9d9d9;"></div>
<div class="b" style="left:903px;top:653.6px;width:12px;height:11.6px;background:#fff;border:1px solid #333;"></div>
<svg style="left:903.5px;top:654px" width="11" height="11" viewBox="0 0 11 11"><path d="M1.6 5.4 L4.2 8.2 L9.6 1.6" fill="none" stroke="#222" stroke-width="1.2"/></svg>
<span class="t" style="left:919.20px;top:654.69px;font-size:11px;color:#222;transform:scaleX(0.9720);">Thread 1</span>
<div class="b" style="left:1057.3px;top:650.6px;width:41.5px;height:18.3px;background:#0a6dd0;border:1px solid #1a1a1a;border-radius:4.5px;"></div>
<div class="b" style="left:899px;top:671px;width:285px;height:24px;background:#fff;border:1px solid #d9d9d9;"></div>
<div class="b" style="left:900px;top:672px;width:15px;height:22px;background:#f8f8f8;"></div>
<div class="b" style="left:916px;top:672px;width:138px;height:22px;background:#f8f8f8;"></div>
<div class="b" style="left:915px;top:671px;width:1px;height:24px;background:#d9d9d9;"></div>
<div class="b" style="left:1054px;top:671px;width:1px;height:24px;background:#d9d9d9;"></div>
<div class="b" style="left:903px;top:676.6px;width:12px;height:11.6px;background:#fff;border:1px solid #333;"></div>
<svg style="left:903.5px;top:677px" width="11" height="11" viewBox="0 0 11 11"><path d="M1.6 5.4 L4.2 8.2 L9.6 1.6" fill="none" stroke="#222" stroke-width="1.2"/></svg>
<span class="t" style="left:919.20px;top:677.69px;font-size:11px;color:#222;transform:scaleX(0.9720);">Thread 2</span>
<div class="b" style="left:1057.3px;top:673.6px;width:41.5px;height:18.3px;background:#7a4a33;border:1px solid #1a1a1a;border-radius:4.5px;"></div>
</div>
</body></html>
